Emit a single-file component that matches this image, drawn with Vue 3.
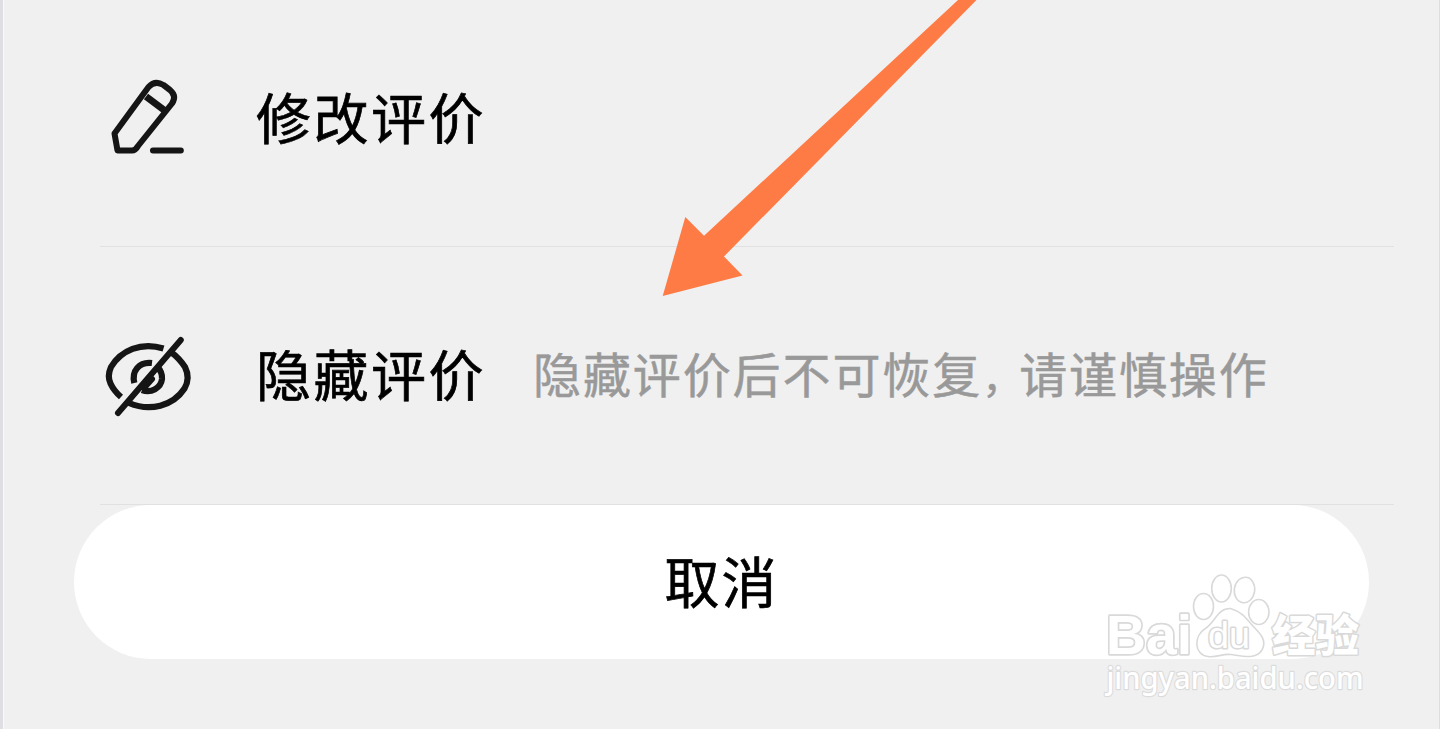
<script setup>
    import { ref } from 'vue';
    //選單項目
    const menuList = ref([
        { icon: "edit", title: "修改评价", hint: null },
        { icon: "hide", title: "隐藏评价", hint: ["隐藏评价后不可恢复", "，", "请谨慎操作"] }
    ])
</script>
<template>
    <main class="sheet">
        <ul class="menu">
            <li v-for="item in menuList" :key="item.icon" class="menu-item" :class="item.icon">
                <svg v-if="item.icon === 'edit'" class="icon" viewBox="0 0 120 110">
                    <path d="M24.500 73.500 L58.500 27 Q65 20 73.500 25 L80 30 Q87 36 82 43.500 L48 86 Q45.500 90.500 42 90.500 L27.500 90.500 Z" />
                    <path class="band" d="M56 36.500 L74 50" />
                    <path d="M63 90.600 H90.800" />
                </svg>
                <svg v-else class="icon" viewBox="0 0 120 110">
                    <path class="cut" d="M73.500 27.500 C51 20.500 31 29.500 21 46 Q17 55 20.500 62.500 Q24 70 31 76" />
                    <path class="cut" d="M39 82 C60 91 83 85 94.500 67.500 Q100.500 57 95 46 Q89 37 81.500 31.500" />
                    <path class="cut" d="M62 42 C49 40.500 41.500 50 44.300 62" />
                    <path class="cut" d="M52 69 C61 72.500 71 67 72 58 Q72.500 51 67 45.500" />
                    <path d="M62 58 L54 67" />
                    <path d="M28 92 L90.800 19" />
                </svg>
                <span class="title">{{ item.title }}</span>
                <span v-if="item.hint" class="hint">{{ item.hint[0] }}<span class="comma">{{ item.hint[1] }}</span>{{ item.hint[2] }}</span>
            </li>
        </ul>
        <button class="cancel" type="button">取消</button>
        <!-- 箭頭 -->
        <svg class="arrow" viewBox="0 0 320 300">
            <path d="M298 0 H316.500 L64 256.500 L82.500 275.500 L2.700 296 L25.300 217 L44 235.700 Z" />
        </svg>
        <!-- 浮水印 -->
        <svg class="watermark" viewBox="0 0 280 140">
            <g class="mark">
                <text class="latin" x="9" y="84" textLength="86" lengthAdjust="spacingAndGlyphs">Bai</text>
                <ellipse cx="106.500" cy="36.500" rx="10" ry="13" />
                <ellipse cx="124.500" cy="18.500" rx="9.800" ry="13.500" />
                <ellipse cx="147.500" cy="20" rx="10.200" ry="12.800" transform="rotate(8 147.500 20)" />
                <ellipse cx="161.800" cy="42" rx="10.200" ry="12.500" />
                <path d="M133.500 38.500 C121 38 118 52 109 58 C96 66 97 85 111 86.500 C119 88 125 83.500 134 84.500 C145 86 159 90 165 80 C171 69 161 62 155 55 C148 47 145 42 133.500 38.500 Z" />
                <text class="du" x="111" y="78" textLength="42" lengthAdjust="spacingAndGlyphs">du</text>
                <text class="cn" x="175" y="82" textLength="87" lengthAdjust="spacingAndGlyphs">经验</text>
                <text class="url" x="9.500" y="119" textLength="257" lengthAdjust="spacingAndGlyphs">jingyan.baidu.com</text>
            </g>
        </svg>
    </main>
</template>
<style>
    body{
        margin: 0;
        overflow: hidden;
    }
</style>
<style scoped>
    .sheet{
        position: relative;
        box-sizing: border-box;
        width: 100%;
        height: 729px;
        overflow: hidden;
        border-left: 3px solid #dedee3;
        border-right: 1px solid #dcdce2;
        background-color: #f0f0f0;
        box-shadow: inset 1px 0 #f9f9f9;
        font-family: "Noto Sans CJK SC", sans-serif;
    }
    .menu{
        display: flex;
        flex-direction: column;
        margin: 0 45px 0 97px;
        padding: 0;
        list-style: none;
    }
    .menu-item{
        display: flex;
        align-items: center;
        box-sizing: border-box;
        height: 258px;
        border-bottom: 1px solid #e1e1e1;
        padding-bottom: 7px;
    }
    .menu-item.edit{
        height: 247px;
        padding-bottom: 17px;
    }
    .icon{
        flex: none;
        width: 120px;
        height: 110px;
        margin: 7px 46px 0 -10px;
        fill: none;
        stroke: #151515;
        stroke-width: 6;
        stroke-linecap: round;
        stroke-linejoin: round;
    }
    .edit .icon{
        margin-top: 1px;
    }
    .cut{
        stroke-width: 6.2;
        stroke-linecap: butt;
    }
    .band{
        stroke-width: 7;
        stroke-linecap: butt;
    }
    .title{
        color: #000;
        font-size: 55px;
        line-height: 80px;
        letter-spacing: 2.500px;
        white-space: nowrap;
        -webkit-text-stroke: 0.7px #000;
    }
    .hint{
        margin-left: 47px;
        color: #999;
        font-size: 48px;
        line-height: 70px;
        letter-spacing: 1.900px;
        white-space: nowrap;
        -webkit-text-stroke: 0.5px #999;
    }
    .comma{
        display: inline-block;
        width: 37px;
        font-size: 40px;
        line-height: 1;
        letter-spacing: 0;
    }
    .cancel{
        display: flex;
        align-items: center;
        justify-content: center;
        box-sizing: border-box;
        width: 1295px;
        height: 154px;
        margin: 0 0 0 71px;
        padding: 0 0 7px;
        border: 0;
        border-radius: 77px;
        background-color: #fff;
        color: #000;
        font-family: inherit;
        font-size: 55px;
        letter-spacing: 2px;
        -webkit-text-stroke: 0.7px #000;
    }
    .arrow{
        position: absolute;
        top: 0;
        left: 657px;
        width: 320px;
        height: 300px;
        fill: #ff7b45;
    }
    .watermark{
        position: absolute;
        top: 570px;
        left: 1094px;
        width: 280px;
        height: 140px;
    }
    .mark{
        fill: #fff;
        stroke: #d9d9d9;
        stroke-width: 1.6;
        stroke-linejoin: round;
    }
    .latin{
        font-family: "Liberation Sans", sans-serif;
        font-size: 56px;
        font-weight: 700;
        stroke-width: 3.4;
        paint-order: stroke;
    }
    .du{
        font-family: "Liberation Sans", sans-serif;
        font-size: 36px;
        stroke-width: 3;
        paint-order: stroke;
    }
    .cn{
        font-size: 44px;
        font-weight: 900;
        stroke-width: 3;
        paint-order: stroke;
    }
    .url{
        font-family: "Noto Sans", sans-serif;
        font-size: 31px;
        font-weight: 500;
        stroke: #dcdcdc;
        stroke-width: 2.4;
        paint-order: stroke;
    }
</style>
